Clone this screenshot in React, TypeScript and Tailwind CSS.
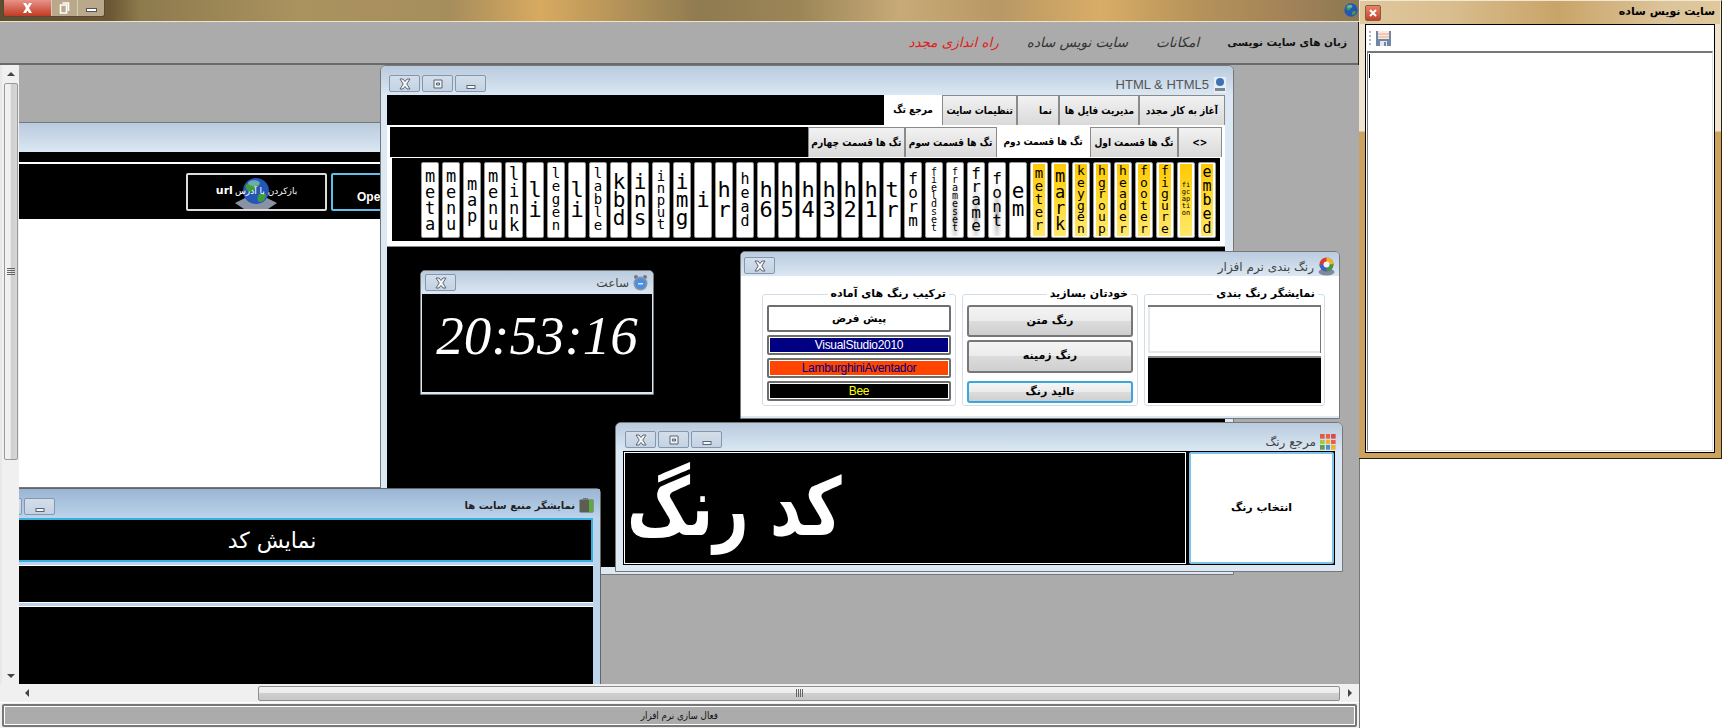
const ui = '[font-family:"DejaVu_Sans",Tahoma,sans-serif]';

const wallpaper =
  'bg-[linear-gradient(90deg,#5f4e2e_0,#6b5733_110px,#8d7a4d_140px,#ab9360_300px,#a68d5c_450px,#d8aa60_540px,#8f7b50_700px,#9c8658_800px,#c7aa78_900px,#b89865_1000px,#d8ad66_1100px,#b5925a_1200px,#a08058_1300px,#8a7850_1360px)]';

const tiles = [
  { t: 'meta', c: 'text-[17px] leading-[16px]' },
  { t: 'menu', c: 'text-[17px] leading-[16px]' },
  { t: 'map', c: 'text-[17px] leading-[16px]' },
  { t: 'menu', c: 'text-[17px] leading-[16px]' },
  { t: 'link', c: 'text-[17px] leading-[17px]' },
  { t: 'li', c: 'text-[22px] leading-[20px]' },
  { t: 'legen', c: 'text-[14px] leading-[13px]' },
  { t: 'li', c: 'text-[22px] leading-[20px]' },
  { t: 'lable', c: 'text-[14px] leading-[13px]' },
  { t: 'kbd', c: 'text-[21px] leading-[18px]' },
  { t: 'ins', c: 'text-[21px] leading-[18px]' },
  { t: 'input', c: 'text-[14px] leading-[12px]' },
  { t: 'img', c: 'text-[21px] leading-[18px]' },
  { t: 'i', c: 'text-[22px] leading-[20px]' },
  { t: 'hr', c: 'text-[22px] leading-[20px]' },
  { t: 'head', c: 'text-[15px] leading-[14px]' },
  { t: 'h6', c: 'text-[22px] leading-[20px]' },
  { t: 'h5', c: 'text-[22px] leading-[20px]' },
  { t: 'h4', c: 'text-[22px] leading-[20px]' },
  { t: 'h3', c: 'text-[22px] leading-[20px]' },
  { t: 'h2', c: 'text-[22px] leading-[20px]' },
  { t: 'h1', c: 'text-[22px] leading-[20px]' },
  { t: 'tr', c: 'text-[22px] leading-[20px]' },
  { t: 'form', c: 'text-[16px] leading-[14px]' },
  { t: 'fieldset', c: 'text-[10px] leading-[8px]' },
  { t: 'frameset', c: 'text-[10px] leading-[8px]', smudge: true },
  { t: 'frame', c: 'text-[16px] leading-[13px]', smudge: true },
  { t: 'font', c: 'text-[16px] leading-[14px]', smudge: true },
  { t: 'em', c: 'text-[21px] leading-[18px]' },
  { t: 'meter', c: 'text-[14px] leading-[13px]', gold: true },
  { t: 'mark', c: 'text-[17px] leading-[16px]', gold: true },
  { t: 'keygen', c: 'text-[13px] leading-[11.5px]', gold: true },
  { t: 'hgroup', c: 'text-[13px] leading-[11.5px]', gold: true },
  { t: 'header', c: 'text-[13px] leading-[11.5px]', gold: true },
  { t: 'footer', c: 'text-[13px] leading-[11.5px]', gold: true },
  { t: 'figure', c: 'text-[13px] leading-[11.5px]', gold: true },
  { t: 'figcaption', c: 'text-[7px] leading-[7px]', gold: true, wide: true },
  { t: 'embed', c: 'text-[15px] leading-[14px]', gold: true },
];

function Tile({ t, c, gold, smudge, wide }: { t: string; c: string; gold?: boolean; smudge?: boolean; wide?: boolean }) {
  const fill = gold
    ? 'bg-[linear-gradient(160deg,#ffc800_0%,#ffd92e_45%,#ffe970_100%)]'
    : smudge
      ? 'bg-[radial-gradient(ellipse_at_50%_72%,#a6a6a6_0%,#e8e8e8_28%,#ffffff_55%)]'
      : 'bg-white';
  return (
    <div className={`flex h-[76px] w-[18px] flex-none rounded-[2px] border border-[#9a9a9a] bg-white py-px ${gold ? 'px-[2px]' : 'px-px'}`}>
      <div className={`flex flex-1 items-center justify-center ${fill}`}>
        <div className={`font-['DejaVu_Sans_Mono',monospace] break-all text-center text-black ${wide ? 'w-[2ch]' : 'w-[1ch]'} ${c}`}>
          {t}
        </div>
      </div>
    </div>
  );
}

function CaptionBtn({ kind }: { kind: 'close' | 'max' | 'min' }) {
  return (
    <div className="flex h-[17px] w-[31px] items-center justify-center rounded-[2px] border border-[#8496b0] bg-[linear-gradient(#d3deea,#c4d2e2)]">
      <svg width="14" height="12" viewBox="0 0 14 12">
        {kind === 'close' && (
          <path d="M2 1h3l2 2.5L9 1h3L8.8 6 12 11H9L7 8.5 5 11H2l3.2-5z" fill="#f4f6f8" stroke="#5a6472" strokeWidth="1" />
        )}
        {kind === 'max' && (
          <path d="M3 2h8v8H3z M5.5 5h3v2h-3z" fill="#eef2f6" fillRule="evenodd" stroke="#5a6472" strokeWidth="1" />
        )}
        {kind === 'min' && <rect x="3" y="7.5" width="8" height="3" fill="#f4f6f8" stroke="#5a6472" strokeWidth="1" />}
      </svg>
    </div>
  );
}

function Controls({ full }: { full?: boolean }) {
  return (
    <div className="flex gap-[2px]">
      <CaptionBtn kind="close" />
      {full && <CaptionBtn kind="max" />}
      {full && <CaptionBtn kind="min" />}
    </div>
  );
}

function HtmlIcon() {
  return (
    <svg width="14" height="18" viewBox="0 0 14 18">
      <rect x="1" y="1" width="12" height="16" rx="1" fill="#e8eef5" />
      <circle cx="7" cy="6" r="4" fill="#3f6fb5" />
      <rect x="2" y="12" width="10" height="3" fill="#7a8696" />
    </svg>
  );
}

function PaletteIcon() {
  return (
    <svg width="17" height="19" viewBox="0 0 17 19">
      <ellipse cx="8.5" cy="15" rx="8" ry="3.5" fill="#7d8aa0" />
      <circle cx="8.5" cy="7.5" r="7" fill="#d83a2f" />
      <path d="M8.5.5a7 7 0 0 1 7 7h-7z" fill="#e9b62c" />
      <path d="M15.5 7.5a7 7 0 0 1-7 7v-7z" fill="#3d9b45" />
      <path d="M8.5 14.5a7 7 0 0 1-7-7h7z" fill="#3464c4" />
      <circle cx="8.5" cy="7.5" r="3" fill="#f2f4f7" />
    </svg>
  );
}

function GridIcon() {
  const colors = ['#e05a4a', '#e8603c', '#e04a4a', '#a5c83c', '#f0b030', '#e8603c', '#5aa04a', '#4a90c8', '#f0b030'];
  return (
    <div className="grid h-[16px] w-[16px] grid-cols-3 gap-px">
      {colors.map((color, i) => (
        <svg key={i} viewBox="0 0 5 5">
          <rect width="5" height="5" fill={color} />
        </svg>
      ))}
    </div>
  );
}

function ClockIcon() {
  return (
    <svg width="15" height="18" viewBox="0 0 15 18">
      <circle cx="3" cy="3" r="2" fill="#777" />
      <circle cx="12" cy="3" r="2" fill="#777" />
      <circle cx="7.5" cy="9.5" r="7" fill="#8d97a3" />
      <circle cx="7.5" cy="9.5" r="5.5" fill="#4d8ee0" />
      <rect x="5" y="9" width="5" height="1.5" fill="#d8e6f6" />
    </svg>
  );
}

function BatteryIcon() {
  return (
    <svg width="15" height="15" viewBox="0 0 15 15">
      <rect x="0.5" y="1.5" width="14" height="13" rx="1" fill="#5b5f52" />
      <rect x="10" y="2" width="4" height="12" fill="#5faa3c" />
      <rect x="4" y="0" width="5" height="2" fill="#777" />
    </svg>
  );
}

function Globe({ size, className }: { size: number; className?: string }) {
  return (
    <svg width={size} height={size} viewBox="0 0 20 20" className={className}>
      <circle cx="10" cy="10" r="9.5" fill="#2456b8" />
      <path d="M4 5c3-3 7-3 8-1s-2 3-3 5-3 2-4 1-3-3-1-5z" fill="#3f9d3c" />
      <path d="M12 12c2-1 5-1 5 1s-2 4-4 4-2-3-1-5z" fill="#3f9d3c" />
      <ellipse cx="8" cy="5" rx="4" ry="2" fill="#8fb8ee" opacity="0.6" />
    </svg>
  );
}

function UrlGlobe() {
  return (
    <svg width="42" height="31" viewBox="0 0 42 31" className="absolute left-[47px] top-[3px]">
      <path d="M0 25 12 19h18l12 6-9 6H9z" fill="#8a93a3" />
      <circle cx="21" cy="13" r="13" fill="#2456b8" />
      <path d="M12 6c4-4 10-4 12-1s-3 4-5 7-4 3-6 1-4-4-1-7z" fill="#3f9d3c" />
      <path d="M24 16c3-1 8-1 7 2s-3 6-6 6-3-5-1-8z" fill="#3f9d3c" />
      <ellipse cx="19" cy="5" rx="6" ry="3" fill="#8fb8ee" opacity="0.6" />
    </svg>
  );
}

function Floppy() {
  return (
    <svg width="15" height="15" viewBox="0 0 15 15">
      <rect width="15" height="15" fill="#6f87a5" />
      <rect x="2" y="0" width="11" height="8" fill="#fbe9e0" />
      <rect x="2" y="2.5" width="11" height="1" fill="#e8a890" />
      <rect x="2" y="5.5" width="11" height="1" fill="#e8a890" />
      <rect x="4" y="10" width="7" height="5" fill="#e4e8ee" />
      <rect x="8" y="11" width="2" height="4" fill="#6f87a5" />
    </svg>
  );
}

function Titled({ title, icon, bold }: { title: string; icon: React.ReactNode; bold?: boolean }) {
  return (
    <div className={`flex items-center gap-[4px] ${ui} ${bold ? 'text-[10px] font-bold text-[#222]' : 'text-[12px] text-[#444]'}`}>
      <span dir="rtl">{title}</span>
      {icon}
    </div>
  );
}

const glass = 'bg-[linear-gradient(#b9cbde,#dbe7f3)]';

function TopTab({ label, w, active, textClass }: { label: string; w: string; active?: boolean; textClass?: string }) {
  return (
    <div
      dir="rtl"
      className={`flex flex-none items-center justify-center ${w} ${textClass ?? ''} ${ui} text-[10.5px] font-bold text-black ${
        active ? 'bg-white' : 'border-x border-t border-[#8a8a8a] bg-[linear-gradient(#f2f2f2,#d9d9d9)]'
      }`}
    >
      <span className="inline-block scale-x-[0.86] whitespace-nowrap">{label}</span>
    </div>
  );
}

function HtmlWindow() {
  return (
    <div className="absolute left-[361px] top-0 flex h-[510px] w-[854px] flex-col overflow-hidden rounded-t-[6px] border border-[#777] bg-[#dce8f4]">
      <div className={`flex h-[29px] flex-none items-start justify-between pl-[8px] pr-[6px] pt-[9px] ${glass}`}>
        <Controls full />
        <div className="flex items-center gap-[4px] font-['Liberation_Sans',sans-serif] text-[13px] text-[#555]">
          HTML &amp; HTML5
          <HtmlIcon />
        </div>
      </div>
      <div className="ml-[6px] mr-[8px] flex min-h-0 flex-1 flex-col pb-[7px]">
        <div className="flex h-[30px] flex-none justify-end bg-black">
          <TopTab label="مرجع تگ" w="w-[58px]" active />
          <TopTab label="تنظیمات سایت" w="w-[75px]" />
          <TopTab label="نما" w="w-[42px]" textClass="pl-[14px]" />
          <TopTab label="مدیریت فایل ها" w="w-[80px]" />
          <TopTab label="آغاز به کار مجدد" w="w-[86px]" />
        </div>
        <div className="flex h-[122px] flex-none flex-col border-b border-[#8a8a8a] bg-white px-[3px] pb-[5px] pt-[2px]">
          <div className="flex h-[30px] flex-none justify-end bg-black">
            <TopTab label="تگ ها قسمت چهارم" w="w-[97px]" />
            <TopTab label="تگ ها قسمت سوم" w="w-[92px]" />
            <TopTab label="تگ ها قسمت دوم" w="w-[93px]" active />
            <TopTab label="تگ ها قسمت اول" w="w-[88px]" />
            <TopTab label="<>" w="w-[44px]" />
          </div>
          <div className="mx-[2px] mt-px flex flex-1 items-center justify-end gap-[3px] bg-black pr-[4px]">
            {tiles.map((tile, i) => (
              <Tile key={i} {...tile} />
            ))}
          </div>
        </div>
        <div className="flex-1 bg-black" />
      </div>
    </div>
  );
}

function BrowserWindow() {
  return (
    <div className="absolute left-[-60px] top-[57px] flex h-[366px] w-[470px] flex-col overflow-hidden border border-[#777] bg-white">
      <div className={`h-[29px] flex-none ${glass}`} />
      <div className="h-[10px] flex-none bg-black" />
      <div className="h-[2px] flex-none bg-white" />
      <div className="flex h-[55px] flex-none items-center gap-[4px] bg-black pl-[226px]">
        <div className={`relative flex h-[38px] w-[141px] flex-none items-center justify-center rounded-[2px] border-2 border-[#dcdcdc] ${ui} text-white`}>
          <UrlGlobe />
          <div dir="rtl" className="relative flex items-center gap-[2px] whitespace-nowrap text-[9px]">
            <span>بازکردن با آدرس</span>
            <span className="text-[11px] font-bold">url</span>
          </div>
        </div>
        <div className="flex h-[38px] w-[80px] flex-none items-center rounded-[2px] border-2 border-[#5cc0ea] pl-[24px] pt-[10px] font-['Liberation_Sans',sans-serif] text-[12px] font-bold text-white">
          Open
        </div>
      </div>
    </div>
  );
}

function ClockWindow() {
  return (
    <div className="absolute left-[401px] top-[205px] flex h-[125px] w-[234px] flex-col overflow-hidden rounded-t-[5px] border border-[#777] bg-[#dce8f4]">
      <div className={`flex h-[23px] flex-none items-start justify-between pl-[4px] pr-[5px] pt-[3px] ${glass}`}>
        <Controls />
        <Titled title="ساعت" icon={<ClockIcon />} />
      </div>
      <div className="mx-px mb-[2px] flex-1 bg-black pt-[12px] text-center font-['Liberation_Serif',serif] text-[55px] italic leading-[60px] text-white">
        20:53:16
      </div>
    </div>
  );
}

const aero = 'bg-[linear-gradient(#f4f4f4_0%,#ebebeb_50%,#dcdcdc_50%,#cfcfcf_100%)]';

function Group({ title, w, children }: { title: string; w: string; children: React.ReactNode }) {
  return (
    <div dir="rtl" className={`relative mt-[7px] h-[112px] flex-none rounded-[3px] border border-[#d3dde8] px-[2px] pt-[10px] ${w}`}>
      <span className={`absolute right-[6px] top-[-8px] whitespace-nowrap bg-white px-[3px] ${ui} text-[11px] font-bold leading-[14px] text-black`}>{title}</span>
      {children}
    </div>
  );
}

function ThemeBtn({ label, c }: { label: string; c: string }) {
  return (
    <div className={`flex flex-none items-center justify-center rounded-[2px] border-2 border-[#6e6e6e] outline outline-1 outline-offset-[-3px] outline-white ${c}`}>
      {label}
    </div>
  );
}

function ColorWindow() {
  const latin = "font-['Liberation_Sans',sans-serif] text-[12px] tracking-[-0.3px]";
  return (
    <div className="absolute left-[721px] top-[186px] flex h-[168px] w-[600px] flex-col overflow-hidden rounded-t-[5px] border border-[#777] bg-[#dce8f4]">
      <div className={`flex h-[24px] flex-none items-start justify-between pl-[3px] pr-[4px] pt-[5px] ${glass}`}>
        <Controls />
        <Titled title="رنگ بندی نرم افزار" icon={<PaletteIcon />} />
      </div>
      <div className="mb-[2px] flex flex-1 items-start justify-end gap-[6px] bg-white pr-[14px] pt-[11px]">
        <Group title="ترکیب رنگ های آماده" w="w-[194px]">
          <div className="flex flex-col gap-[3px] px-[2px]">
            <ThemeBtn label="پیش فرض" c={`h-[27px] bg-white ${ui} text-[10.5px] font-bold text-black`} />
            <ThemeBtn label="VisualStudio2010" c={`h-[20px] bg-[#000080] text-white ${latin}`} />
            <ThemeBtn label="LamburghiniAventador" c={`h-[20px] bg-[#ff4500] text-[#000080] ${latin}`} />
            <ThemeBtn label="Bee" c={`h-[20px] bg-black text-[#ffff00] ${latin}`} />
          </div>
        </Group>
        <Group title="خودتان بسازید" w="w-[176px]">
          <div className={`flex flex-col px-[2px] ${ui} text-[11px] font-bold text-black`}>
            <button className={`h-[32px] rounded-[3px] border-2 border-[#777] ${aero}`}>رنگ متن</button>
            <button className={`mt-[3px] h-[33px] rounded-[3px] border-2 border-[#777] ${aero}`}>رنگ زمینه</button>
            <button className={`mt-[8px] h-[22px] rounded-[3px] border-2 border-[#3aa7dc] ${aero}`}>تالید رنگ</button>
          </div>
        </Group>
        <Group title="نمایشگر رنگ بندی" w="w-[181px]">
          <div className="flex flex-col gap-[3px] px-px">
            <div className="h-[48px] border-r border-t-2 border-[#777] border-r-[#777] bg-white shadow-[inset_2px_-2px_0_#e8e8e8]" />
            <div className="h-[47px] border-t-2 border-[#888] bg-black" />
          </div>
        </Group>
      </div>
    </div>
  );
}

function RefWindow() {
  return (
    <div className="absolute left-[596px] top-[357px] flex h-[150px] w-[728px] flex-col overflow-hidden rounded-t-[6px] border border-[#777] bg-[#dce8f4]">
      <div className={`flex h-[28px] flex-none items-start justify-between pl-[9px] pr-[6px] pt-[8px] ${glass}`}>
        <Controls full />
        <div className="pt-[2px]">
          <Titled title="مرجع رنگ" icon={<GridIcon />} />
        </div>
      </div>
      <div className="ml-[7px] mr-[7px] flex h-[114px] flex-none gap-[3px] bg-black p-px">
        <div className={`flex w-[562px] flex-none items-center overflow-hidden border border-white pl-[2px] ${ui} text-[80px] font-bold leading-[100px] text-white`}>
          <span dir="rtl" className="inline-block origin-left scale-x-[0.77] whitespace-nowrap">کد رنگ</span>
        </div>
        <div dir="rtl" className={`flex flex-1 items-center justify-center rounded-[2px] border-2 border-[#7cc4ea] bg-white ${ui} text-[11px] font-bold text-black`}>
          انتخاب رنگ
        </div>
      </div>
    </div>
  );
}

function SourceWindow() {
  return (
    <div className="absolute left-[-69px] top-[423px] flex h-[300px] w-[651px] flex-col rounded-t-[5px] border border-[#666] bg-[#bcd4ec]">
      <div className="flex h-[29px] flex-none items-start justify-between bg-[linear-gradient(#9ab5d3,#bcd4ec)] pl-[7px] pr-[6px] pt-[9px]">
        <Controls full />
        <Titled title="نمایشگر منبع سایت ها" icon={<BatteryIcon />} bold />
      </div>
      <div className="mr-[7px] flex flex-col gap-[3px]">
        <div dir="rtl" className={`flex h-[44px] items-center justify-center border-2 border-[#36b0de] bg-black ${ui} text-[22px] text-white`}>
          نمایش کد
        </div>
        <div className="h-[38px] border-y border-white bg-black" />
        <div className="h-[200px] border-t border-white bg-black" />
      </div>
    </div>
  );
}

function VScroll() {
  return (
    <div className="flex w-[19px] flex-none flex-col items-center border-l-2 border-[#e8e8e8] bg-[#f0f0f0]">
      <div className="flex h-[18px] flex-none items-center justify-center">
        <div className="h-0 w-0 border-x-[4px] border-b-[4px] border-x-transparent border-b-[#444]" />
      </div>
      <div className="flex h-[377px] w-[14px] flex-none items-center justify-center rounded-[2px] border border-[#999] bg-[linear-gradient(90deg,#f3f3f3_0%,#eeeeee_45%,#cfcfcf_50%,#d6d6d6_100%)]">
        <div className="flex w-[8px] flex-col gap-px">
          <div className="h-px bg-[#666]" />
          <div className="h-px bg-[#666]" />
          <div className="h-px bg-[#666]" />
          <div className="h-px bg-[#666]" />
        </div>
      </div>
      <div className="flex flex-1 items-end justify-center pb-[6px]">
        <div className="h-0 w-0 border-x-[4px] border-t-[4px] border-x-transparent border-t-[#444]" />
      </div>
    </div>
  );
}

function HScroll() {
  return (
    <div className="flex h-[18px] flex-none items-center bg-[#f0f0f0] pl-[25px]">
      <div className="h-0 w-0 flex-none border-y-[4px] border-r-[4px] border-y-transparent border-r-[#444]" />
      <div className="ml-[229px] flex h-[15px] w-[1082px] flex-none items-center justify-center rounded-[2px] border border-[#8f8f8f] bg-[linear-gradient(#f2f2f2_0%,#ececec_45%,#cfcfcf_50%,#c6c6c6_100%)]">
        <div className="flex h-[8px] gap-px">
          <div className="w-px bg-[#666]" />
          <div className="w-px bg-[#666]" />
          <div className="w-px bg-[#666]" />
          <div className="w-px bg-[#666]" />
        </div>
      </div>
      <div className="ml-[8px] h-0 w-0 flex-none border-y-[4px] border-l-[4px] border-y-transparent border-l-[#444]" />
    </div>
  );
}

function MainWindow() {
  return (
    <div className="flex h-[728px] w-[1360px] flex-none flex-col border-r border-[#777] bg-[#ababab]">
      <div className={`relative flex h-[22px] flex-none border-b border-[#efe3c8] ${wallpaper}`}>
        <div className="flex h-[17px] w-[102px] flex-none translate-x-[3px] overflow-hidden rounded-b-[3px] border border-t-0 border-[#55493a] text-white">
          <div className="flex w-[47px] items-center justify-center bg-[linear-gradient(#e8938a,#c23a22)]">
            <svg width="11" height="10" viewBox="0 0 11 10">
              <path d="M1 0h3l1.5 2.5L7 0h3L7 5l3 5H7L5.5 7.5 4 10H1l3-5z" fill="#fff" />
            </svg>
          </div>
          <div className="flex w-[27px] items-center justify-center border-x border-[#ffffff66] bg-[#b9a98a]">
            <svg width="11" height="12" viewBox="0 0 11 12">
              <path d="M3.5 1h6v8M1.5 3h6v8h-6z" fill="none" stroke="#fff" strokeWidth="1.6" />
            </svg>
          </div>
          <div className="flex flex-1 items-center justify-center bg-[#b9a98a] pt-[3px]">
            <div className="h-[4px] w-[11px] border border-[#555] bg-white" />
          </div>
        </div>
        <Globe size={14} className="absolute right-[1px] top-[3px]" />
      </div>
      <div dir="rtl" className={`flex h-[43px] flex-none items-center gap-[28px] border-b-2 border-[#6a6a6a] pr-[12px] ${ui} text-[13.5px]`}>
        <span className="text-[10.5px] font-bold text-[#111]">زبان های سایت نویسی</span>
        <span className="italic text-[#333]">امکانات</span>
        <span className="italic text-[#333]">سایت نویس ساده</span>
        <span className="italic text-[#e02020]">راه اندازی مجدد</span>
      </div>
      <div className="flex min-h-0 flex-1">
        <VScroll />
        <div className="relative min-w-0 flex-1 overflow-hidden bg-[#ababab]">
          <BrowserWindow />
          <HtmlWindow />
          <ClockWindow />
          <ColorWindow />
          <RefWindow />
          <SourceWindow />
        </div>
      </div>
      <HScroll />
      <div className="flex h-[26px] flex-none items-stretch border-t border-white bg-[#f0f0f0] px-[2px] pb-[1px] pt-[1px]">
        <div dir="rtl" className={`flex flex-1 items-center justify-center rounded-[2px] border-2 border-[#777] bg-[#ababab] outline outline-1 outline-offset-[-3px] outline-white ${ui} text-[10px] text-[#111]`}>
          <span className="inline-block scale-x-[0.87]">فعال سازی نرم افزار</span>
        </div>
      </div>
    </div>
  );
}

function EditorWindow() {
  return (
    <div className="-ml-[2px] flex h-[459px] w-[364px] flex-none flex-col self-start border border-[#2a2010] border-t-[#f2e8d2] bg-[linear-gradient(#efe4d0_0,#efe4d0_130px,#cca25f_131px,#cca25f_100%)] px-[1px] pb-[5px]">
      <div className="flex h-[23px] flex-none items-center justify-between bg-[linear-gradient(90deg,#e0c89d_0%,#d8bd8e_25%,#c9a468_55%,#dcc49a_85%,#e0c89d_100%)] px-[5px]">
        <div className="flex h-[16px] w-[16px] flex-none items-center justify-center rounded-[2px] border border-[#8a5a40] bg-[linear-gradient(#e8836a,#c0452a)]">
          <svg width="8" height="8" viewBox="0 0 8 8">
            <path d="M1 1l6 6M7 1l-6 6" stroke="#fff" strokeWidth="2" />
          </svg>
        </div>
        <div dir="rtl" className={`${ui} text-[11px] font-bold text-black`}>سایت نویس ساده</div>
      </div>
      <div className="mx-[5px] flex min-h-0 flex-1 flex-col border border-black bg-white">
        <div className="flex h-[26px] flex-none items-center gap-[5px] pl-[3px]">
          <div className="flex flex-col gap-[2px]">
            <div className="h-[2px] w-[2px] bg-[#b5b5b5]" />
            <div className="h-[2px] w-[2px] bg-[#b5b5b5]" />
            <div className="h-[2px] w-[2px] bg-[#b5b5b5]" />
            <div className="h-[2px] w-[2px] bg-[#b5b5b5]" />
          </div>
          <Floppy />
        </div>
        <div className="mx-[1px] mb-[1px] flex-1 border-x border-b border-t-2 border-[#e2e2e2] border-l-[#777] border-t-[#777] pl-[1px] pt-[1px]">
          <div className="h-[24px] w-px bg-black" />
        </div>
      </div>
    </div>
  );
}

export default function App() {
  return (
    <div className="flex h-[728px] w-[1722px] overflow-hidden bg-white">
      <MainWindow />
      <EditorWindow />
    </div>
  );
}
